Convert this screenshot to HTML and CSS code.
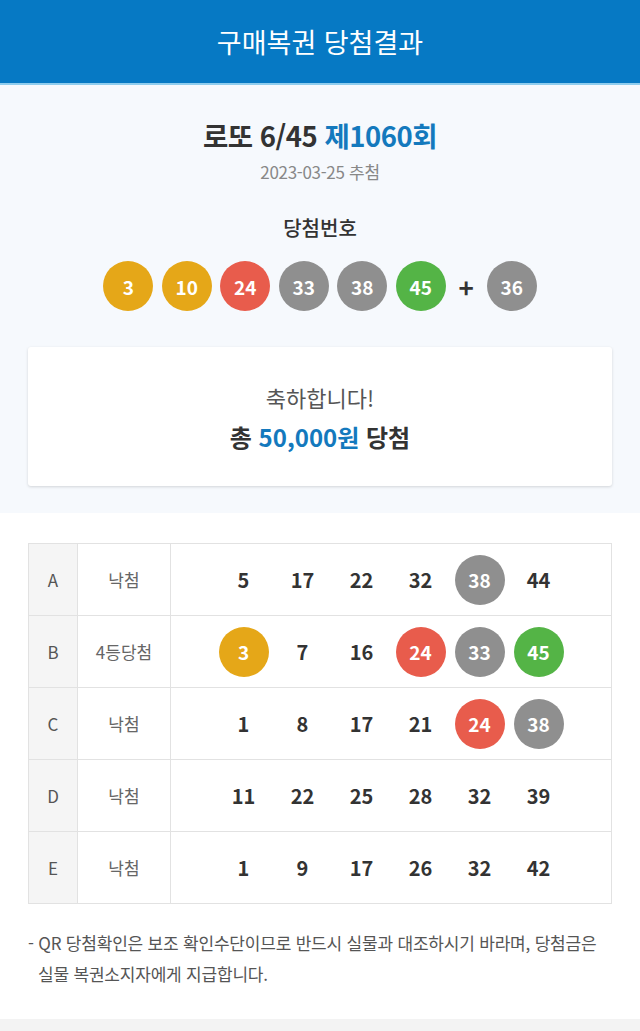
FILE: index.html
```html
<!DOCTYPE html>
<html lang="ko">
<head>
  <meta charset="UTF-8">
  <title>구매복권 당첨결과</title>
  <meta name="viewport" content="width=device-width, initial-scale=1.0">
  <link rel="stylesheet" href="styles.css">
</head>
<body>

  <div class="header">구매복권 당첨결과</div>

  <div class="summary">
    <h1 class="round">로또 6/45 <span class="blue">제1060회</span></h1>
    <div class="date">2023-03-25 추첨</div>

    <h2 class="win-title">당첨번호</h2>
    <div class="win-balls">
      <span class="ball yellow">3</span>
      <span class="ball yellow">10</span>
      <span class="ball red">24</span>
      <span class="ball gray">33</span>
      <span class="ball gray">38</span>
      <span class="ball green">45</span>
      <span class="plus">+</span>
      <span class="ball gray">36</span>
    </div>

    <div class="prize-card">
      <p class="congrats">축하합니다!</p>
      <p class="total">총 <span class="blue">50,000원</span> 당첨</p>
    </div>
  </div>

  <div class="results">
    <table class="result-table">
      <tr>
        <td class="game">A</td>
        <td class="rank">낙첨</td>
        <td class="nums">
          <div class="num-row">
            <span class="num">5</span><span class="num">17</span><span class="num">22</span>
            <span class="num">32</span><span class="num ball gray">38</span><span class="num">44</span>
          </div>
        </td>
      </tr>
      <tr>
        <td class="game">B</td>
        <td class="rank">4등당첨</td>
        <td class="nums">
          <div class="num-row">
            <span class="num ball yellow">3</span><span class="num">7</span><span class="num">16</span>
            <span class="num ball red">24</span><span class="num ball gray">33</span><span class="num ball green">45</span>
          </div>
        </td>
      </tr>
      <tr>
        <td class="game">C</td>
        <td class="rank">낙첨</td>
        <td class="nums">
          <div class="num-row">
            <span class="num">1</span><span class="num">8</span><span class="num">17</span>
            <span class="num">21</span><span class="num ball red">24</span><span class="num ball gray">38</span>
          </div>
        </td>
      </tr>
      <tr>
        <td class="game">D</td>
        <td class="rank">낙첨</td>
        <td class="nums">
          <div class="num-row">
            <span class="num">11</span><span class="num">22</span><span class="num">25</span>
            <span class="num">28</span><span class="num">32</span><span class="num">39</span>
          </div>
        </td>
      </tr>
      <tr>
        <td class="game">E</td>
        <td class="rank">낙첨</td>
        <td class="nums">
          <div class="num-row">
            <span class="num">1</span><span class="num">9</span><span class="num">17</span>
            <span class="num">26</span><span class="num">32</span><span class="num">42</span>
          </div>
        </td>
      </tr>
    </table>

    <p class="notice">- QR 당첨확인은 보조 확인수단이므로 반드시 실물과 대조하시기 바라며, 당첨금은 실물 복권소지자에게 지급합니다.</p>
  </div>

  <div class="bottom-bar"></div>

</body>
</html>
```

FILE: styles.css
```css
* {
  box-sizing: border-box;
}

body {
  font-family: 'Noto Sans CJK KR', 'Noto Sans', sans-serif;
  margin: 0;
  padding: 0;
  background: #fff;
  color: #333;
}

.blue {
  color: #1479bd;
}

.header {
  height: 85px;
  background: #0679c4;
  border-bottom: 2px solid #8fcdee;
  color: #fff;
  font-size: 27px;
  text-align: center;
  line-height: 83px;
}

.summary {
  background: #f6f9fd;
  padding: 30px 28px 27px;
  text-align: center;
}

.round {
  margin: 0;
  font-size: 27.5px;
  font-weight: 700;
  line-height: 40px;
  letter-spacing: -0.5px;
}

.date {
  margin-top: 6px;
  font-size: 17px;
  color: #888;
  line-height: 22px;
  letter-spacing: -0.3px;
}

.win-title {
  margin: 30px 0 0;
  font-size: 20px;
  font-weight: 500;
  line-height: 30px;
}

.win-balls {
  display: flex;
  justify-content: center;
  align-items: center;
  gap: 8.5px;
  margin-top: 18px;
}

.ball {
  display: inline-flex;
  align-items: center;
  justify-content: center;
  width: 50px;
  height: 50px;
  border-radius: 50%;
  color: #fff;
  font-size: 19px;
  font-weight: 700;
}

.yellow { background: #e5a718; }
.red { background: #e85c4c; }
.gray { background: #8f8f8f; }
.green { background: #54b446; }

.plus {
  width: 24px;
  font-size: 26px;
  font-weight: 700;
  text-align: center;
  color: #333;
}

.prize-card {
  margin-top: 36px;
  background: #fff;
  border-radius: 3px;
  box-shadow: 0 1px 3px rgba(0,0,0,0.15);
  padding: 32px 0 31px;
}

.congrats {
  margin: 0;
  font-size: 22px;
  color: #555;
  line-height: 36px;
}

.total {
  margin: 4px 0 0;
  font-size: 24px;
  font-weight: 700;
  line-height: 36px;
}

.results {
  padding: 30px 28px 30px;
}

.result-table {
  width: 100%;
  border-collapse: collapse;
  border: 1px solid #e2e2e2;
}

.result-table td {
  height: 72px;
  border: 1px solid #e2e2e2;
  text-align: center;
  padding: 0;
}

.game {
  width: 49px;
  background: #f5f5f5;
  font-size: 17px;
  color: #555;
}

.rank {
  width: 93px;
  font-size: 17px;
  color: #666;
}

.num-row {
  display: grid;
  grid-template-columns: repeat(6, 59px);
  justify-content: center;
  justify-items: center;
  align-items: center;
}

.num {
  font-size: 20px;
  font-weight: 700;
  color: #333;
}

.num.ball {
  color: #fff;
  font-size: 19px;
}

.notice {
  margin: 23px 0 0;
  padding-left: 10px;
  text-indent: -10px;
  font-size: 17px;
  line-height: 31px;
  color: #555;
  letter-spacing: -0.2px;
}

.bottom-bar {
  height: 40px;
  background: #f3f3f3;
}
```
